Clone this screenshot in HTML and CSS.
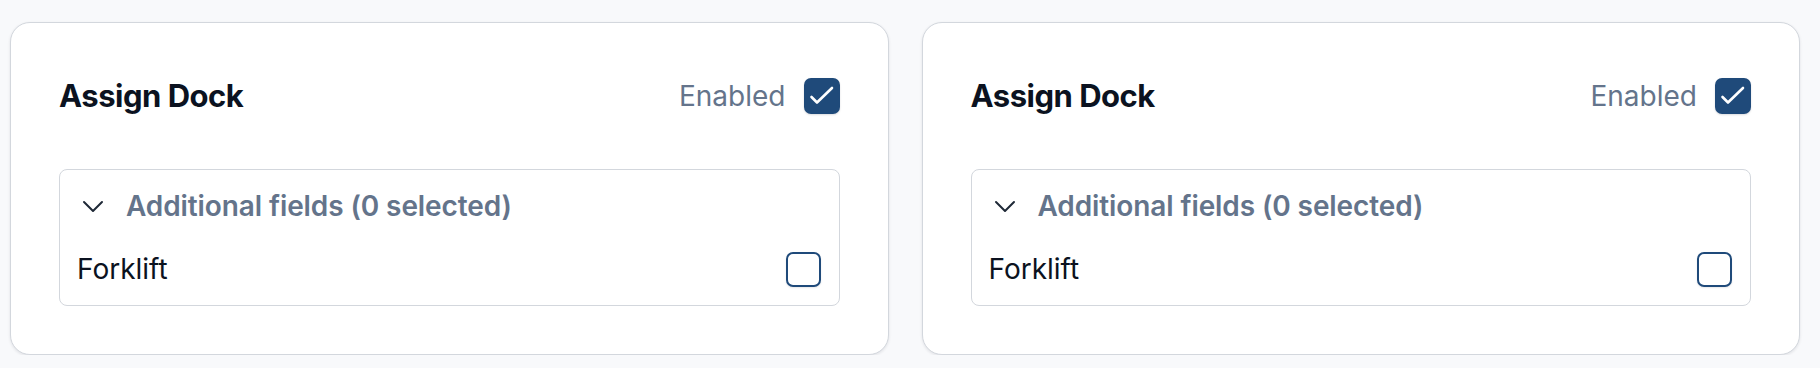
FILE: index.html
```html
<!DOCTYPE html>
<html lang="en">
<head>
<meta charset="utf-8">
<title>Assign Dock</title>
<link rel="stylesheet" href="styles.css">
</head>
<body>
<div class="page">
  <section class="card">
    <div class="card-head">
      <h2 class="card-title">Assign Dock</h2>
      <label class="toggle">
        <span class="toggle-label">Enabled</span>
        <span class="check check-on">
          <svg width="36" height="36" viewBox="0 0 36 36"><polyline points="7.5,19 13,24.5 28,10" fill="none" stroke="#fff" stroke-width="2.6" stroke-linecap="round" stroke-linejoin="round"/></svg>
        </span>
      </label>
    </div>
    <div class="fields">
      <div class="fields-head">
        <svg class="chev" width="34" height="40" viewBox="0 0 34 40"><polyline points="8,16 17,25 26,16" fill="none" stroke="#1f2937" stroke-width="2" stroke-linecap="round" stroke-linejoin="round"/></svg>
        <span class="fields-title">Additional fields (0 selected)</span>
      </div>
      <div class="field-row">
        <span class="field-name">Forklift</span>
        <span class="check check-off"></span>
      </div>
    </div>
  </section>
  <section class="card">
    <div class="card-head">
      <h2 class="card-title">Assign Dock</h2>
      <label class="toggle">
        <span class="toggle-label">Enabled</span>
        <span class="check check-on">
          <svg width="36" height="36" viewBox="0 0 36 36"><polyline points="7.5,19 13,24.5 28,10" fill="none" stroke="#fff" stroke-width="2.6" stroke-linecap="round" stroke-linejoin="round"/></svg>
        </span>
      </label>
    </div>
    <div class="fields">
      <div class="fields-head">
        <svg class="chev" width="34" height="40" viewBox="0 0 34 40"><polyline points="8,16 17,25 26,16" fill="none" stroke="#1f2937" stroke-width="2" stroke-linecap="round" stroke-linejoin="round"/></svg>
        <span class="fields-title">Additional fields (0 selected)</span>
      </div>
      <div class="field-row">
        <span class="field-name">Forklift</span>
        <span class="check check-off"></span>
      </div>
    </div>
  </section>
</div>
</body>
</html>
```
FILE: styles.css
```css
* { box-sizing: border-box; }
html, body {
  margin: 0;
  padding: 0;
  background: #f8f9fb;
  font-family: Inter, "Noto Sans", "Liberation Sans", sans-serif;
}
.page {
  display: grid;
  grid-template-columns: 1fr 1fr;
  column-gap: 33px;
  padding: 22px 20px 0 10px;
}
.card {
  background: #ffffff;
  border: 1px solid #d3d7dd;
  border-radius: 20px;
  padding: 48px;
  box-shadow: 0 1px 3px rgba(15, 23, 42, 0.1);
}
.card-head {
  display: flex;
  align-items: center;
  justify-content: space-between;
  height: 50px;
  margin-bottom: 48px;
}
.card-title {
  margin: 0;
  font-size: 31px;
  line-height: 50px;
  font-weight: 700;
  color: #0b1220;
  letter-spacing: -0.5px;
}
.toggle {
  display: flex;
  align-items: center;
  gap: 18px;
}
.toggle-label {
  font-size: 28px;
  color: #64748b;
  font-weight: 400;
}
.check {
  display: block;
  width: 36px;
  height: 36px;
  border-radius: 7px;
}
.check svg { display: block; }
.check-on {
  background: #1f4a7a;
  box-shadow: 0 1px 2px rgba(15, 23, 42, 0.15);
}
.check-off {
  width: 35px;
  height: 35px;
  margin-right: 2px;
  border: 2px solid #1f4a7a;
  background: #fff;
  box-shadow: 0 1px 2px rgba(15, 23, 42, 0.1);
}
.fields {
  border: 1px solid #d3d7dd;
  border-radius: 8px;
  padding: 16px;
}
.fields-head {
  display: flex;
  align-items: center;
  height: 40px;
  margin-bottom: 23px;
}
.chev { display: block; margin-right: 16px; }
.fields-title {
  font-size: 28px;
  font-weight: 600;
  color: #64748b;
  line-height: 40px;
  letter-spacing: -0.1px;
}
.field-row {
  display: flex;
  align-items: center;
  justify-content: space-between;
  height: 40px;
}
.field-name {
  font-size: 28px;
  color: #0b1220;
  font-weight: 400;
  padding-left: 1px;
}
```
